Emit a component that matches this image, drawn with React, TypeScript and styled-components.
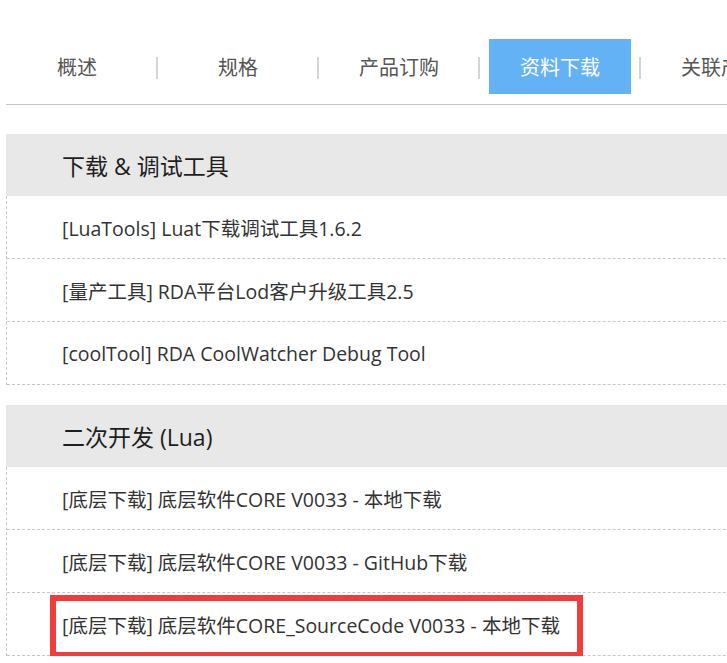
import React from 'react';
import styled, { createGlobalStyle } from 'styled-components';

const GlobalStyle = createGlobalStyle`
  html, body {
    margin: 0;
    padding: 0;
    background: #fff;
    overflow: hidden;
  }
  body {
    font-family: "Open Sans", "Noto Sans CJK SC", sans-serif;
  }
`;

const Page = styled.div`
  width: 900px;
  padding-left: 6px;
`;

const TabBar = styled.ul`
  display: flex;
  list-style: none;
  margin: 0;
  padding: 39px 0 0;
  height: 55px;
  border-bottom: 1px solid #c4c4c4;
  padding-bottom: 10px;
`;

const Tab = styled.li<{ $active?: boolean }>`
  position: relative;
  flex: 0 0 142px;
  height: 55px;
  margin-right: 19px;
  display: flex;
  align-items: center;
  justify-content: center;
  font-size: 20px;
  color: ${p => (p.$active ? '#fff' : '#555')};
  background: ${p => (p.$active ? '#64b2f6' : 'transparent')};

  &:after {
    content: '';
    position: absolute;
    right: -10px;
    top: 18px;
    width: 2px;
    height: 22px;
    background: #d4d4d4;
  }
`;

const Section = styled.section`
  margin-top: 29px;

  & + & {
    margin-top: 20px;
  }
`;

const SectionTitle = styled.h3`
  margin: 0;
  height: 62px;
  display: flex;
  align-items: center;
  padding-left: 56px;
  background: #e8e8e8;
  font-size: 23px;
  font-weight: normal;
  color: #1e1e1e;
`;

const List = styled.ul`
  list-style: none;
  margin: 0;
  padding: 0;
  border-left: 1px dashed #c8c8c8;
`;

const Row = styled.li`
  position: relative;
  height: 62px;
  display: flex;
  align-items: center;
  padding-left: 55px;
  border-bottom: 1px dashed #c8c8c8;
  font-size: 19.5px;
  color: #333;
  white-space: nowrap;
`;

const Highlight = styled.span`
  position: absolute;
  left: 43px;
  top: 2px;
  width: 521px;
  height: 51px;
  border: 6px solid #f23b3b;
  pointer-events: none;
`;

const tabs = ['概述', '规格', '产品订购', '资料下载', '关联产品'];

const sections = [
  {
    title: '下载 & 调试工具',
    items: [
      '[LuaTools] Luat下载调试工具1.6.2',
      '[量产工具] RDA平台Lod客户升级工具2.5',
      '[coolTool] RDA CoolWatcher Debug Tool',
    ],
  },
  {
    title: '二次开发 (Lua)',
    items: [
      '[底层下载] 底层软件CORE V0033 - 本地下载',
      '[底层下载] 底层软件CORE V0033 - GitHub下载',
      '[底层下载] 底层软件CORE_SourceCode V0033 - 本地下载',
    ],
  },
];

export default function App() {
  return (
    <>
      <GlobalStyle />
      <Page>
        <TabBar>
          {tabs.map((t, i) => (
            <Tab key={t} $active={i === 3}>{t}</Tab>
          ))}
        </TabBar>
        {sections.map((s, si) => (
          <Section key={s.title}>
            <SectionTitle>{s.title}</SectionTitle>
            <List>
              {s.items.map((item, i) => (
                <Row key={item}>
                  {item}
                  {si === 1 && i === 2 && <Highlight />}
                </Row>
              ))}
            </List>
          </Section>
        ))}
      </Page>
    </>
  );
}
